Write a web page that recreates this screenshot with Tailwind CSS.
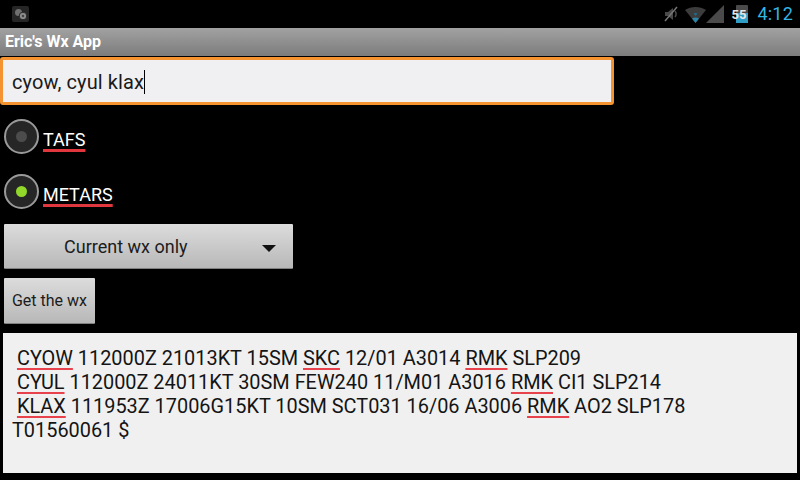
<!DOCTYPE html>
<html>
<head>
<meta charset="utf-8">
<script src="https://cdn.jsdelivr.net/npm/@tailwindcss/browser@4"></script>
</head>
<body class="m-0 bg-black">
<div class="w-[800px] h-[480px] overflow-hidden bg-black flex flex-col font-['Roboto',sans-serif]">

  <!-- status bar -->
  <div class="h-[28px] flex items-center pl-[12px] pr-[7px] shrink-0">
    <div class="w-[17px] h-[16px] rounded-[2px] bg-[#262626] flex items-center justify-center">
      <svg width="16" height="13" viewBox="0 0 16 13"><circle cx="5.500" cy="4.500" r="3.500" fill="#707070"/><circle cx="10" cy="8" r="3.800" fill="#8c8c8c" stroke="#262626"/><circle cx="10" cy="8" r="1.200" fill="#444"/></svg>
    </div>
    <div class="ml-auto flex items-center">
      <svg width="16" height="18" viewBox="0 0 16 18" class="mr-[6px]"><path d="M2 7h3l5-4v12l-5-4H2z" fill="#4a4a4a"/><path d="M2 16L14 2" stroke="#777" stroke-width="1.500"/><path d="M12 6c1.500 2 1.500 4 0 6" stroke="#4a4a4a" fill="none" stroke-width="1.500"/></svg>
      <svg width="40" height="18" viewBox="0 0 40 18" class="mr-[6px]"><path d="M0 5C6 1 15 1 21 5L10.500 18z" fill="#3c3c3c"/><path d="M7 13.500c2-1.500 5-1.500 7 0L10.500 18z" fill="#2a84a8"/><path d="M8.500 8.500c1.300-.6 2.700-.6 4 0L10.500 11z" fill="#1f6a88"/><path d="M21 18L39 0v18z" fill="#4a4a4a"/></svg>
      <div class="relative w-[18px] h-[18px] mr-[8px]">
        <div class="absolute left-[5px] top-0 w-[12px] h-[18px] bg-[#4a4a4a] rounded-t-[1px]"></div>
        <div class="absolute left-[5px] top-[8px] w-[12px] h-[10px] bg-[#2f9dc6]"></div>
        <span class="absolute left-0 top-[3px] text-[13px] leading-[13px] font-bold text-[#e6e6e6]">55</span>
      </div>
      <span class="text-[#33b5e5] text-[18px] leading-[28px] tracking-[0.2px]">4:12</span>
    </div>
  </div>

  <!-- action bar -->
  <div class="h-[28px] shrink-0 bg-gradient-to-b from-[#a2a2a2] to-[#7c7c7c] flex items-center px-[5px]">
    <span class="text-white text-[16px] font-bold">Eric's Wx App</span>
  </div>

  <!-- input -->
  <div class="mt-[1px] w-[614px] h-[48px] shrink-0 bg-[#f0f0f2] border-[3px] border-[#f59331] rounded-[3px] flex items-center pl-[9px] pt-[1px]">
    <span class="text-[20px] tracking-[0.1px] text-[#1a1a1a] border-r border-black leading-[24px]">cyow, cyul klax</span>
  </div>

  <!-- radios -->
  <div class="mt-[14px] ml-[4px] flex items-center h-[35px] shrink-0">
    <div class="w-[35px] h-[35px] rounded-full border-2 border-[#9a9a9a] bg-[#262626] flex items-center justify-center">
      <div class="w-[11px] h-[11px] rounded-full bg-[#4c4c4c]"></div>
    </div>
    <span class="ml-[4px] mt-[5px] text-white text-[18px] leading-[21px] underline decoration-[#e0373f] decoration-[3px] underline-offset-[3px]">TAFS</span>
  </div>
  <div class="mt-[20px] ml-[4px] flex items-center h-[35px] shrink-0">
    <div class="w-[35px] h-[35px] rounded-full border-2 border-[#9a9a9a] bg-[#262626] flex items-center justify-center">
      <div class="w-[11px] h-[11px] rounded-full bg-[#92d82a]"></div>
    </div>
    <span class="ml-[4px] mt-[5px] text-white text-[18px] leading-[21px] underline decoration-[#e0373f] decoration-[3px] underline-offset-[3px]">METARS</span>
  </div>

  <!-- spinner -->
  <div class="mt-[15px] ml-[4px] w-[289px] h-[45px] shrink-0 bg-gradient-to-b from-[#dcdcdc] to-[#b8b8b8] border-b border-[#808080] rounded-[1px] relative flex items-center pl-[60px]">
    <span class="text-[18px] text-[#1c1c1c]">Current wx only</span>
    <div class="absolute right-[17px] top-[21px] w-0 h-0 border-x-[7px] border-x-transparent border-t-[7px] border-t-[#111]"></div>
  </div>

  <!-- button -->
  <button class="mt-[9px] ml-[4px] w-[91px] h-[46px] shrink-0 bg-gradient-to-b from-[#dcdcdc] to-[#b8b8b8] border-b border-[#808080] rounded-[1px] text-[16px] text-[#1c1c1c] text-center">Get the wx</button>

  <!-- result -->
  <div class="mt-[9px] mx-[3px] h-[140px] shrink-0 bg-[#f0f0f0] pt-[14px] pl-[9px] pr-[4px] text-[19.9px] leading-[24px] text-[#141414] whitespace-nowrap">
    <div>&nbsp;<span class="underline decoration-[#e8424d] decoration-2 underline-offset-[3px]">CYOW</span> 112000Z 21013KT 15SM <span class="underline decoration-[#e8424d] decoration-2 underline-offset-[3px]">SKC</span> 12/01 A3014 <span class="underline decoration-[#e8424d] decoration-2 underline-offset-[3px]">RMK</span> SLP209</div>
    <div>&nbsp;<span class="underline decoration-[#e8424d] decoration-2 underline-offset-[3px]">CYUL</span> 112000Z 24011KT 30SM FEW240 11/M01 A3016 <span class="underline decoration-[#e8424d] decoration-2 underline-offset-[3px]">RMK</span> CI1 SLP214</div>
    <div>&nbsp;<span class="underline decoration-[#e8424d] decoration-2 underline-offset-[3px]">KLAX</span> 111953Z 17006G15KT 10SM SCT031 16/06 A3006 <span class="underline decoration-[#e8424d] decoration-2 underline-offset-[3px]">RMK</span> AO2 SLP178</div>
    <div>T01560061 $</div>
  </div>
</div>
</body>
</html>
